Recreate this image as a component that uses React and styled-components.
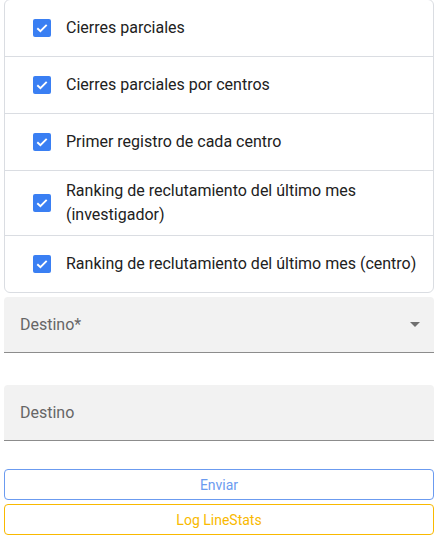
import React from "react";
import styled, { createGlobalStyle } from "styled-components";

const Global = createGlobalStyle`
  html, body { margin: 0; padding: 0; background: #fff; }
  body { font-family: Roboto, "Noto Sans", "Liberation Sans", sans-serif; }
  * { box-sizing: border-box; }
`;

const Page = styled.div`
  display: flex;
  flex-direction: column;
  padding: 0 3px 0 4px;
  width: 437px;
`;

const List = styled.ul`
  list-style: none;
  margin: -1px 0 0 0;
  padding: 0;
  border: 1px solid #dadde2;
  border-radius: 6px;
  overflow: hidden;
`;

const Row = styled.li`
  box-sizing: content-box;
  display: flex;
  align-items: center;
  gap: 15px;
  min-height: 40px;
  padding: 8px 4px 8px 28px;
  border-top: ${(p) => (p.$first ? "none" : "1px solid #dadde2")};
  font-size: 16px;
  line-height: 24px;
  color: #212121;
`;

const Box = styled.span`
  flex: none;
  width: 18px;
  height: 18px;
  border-radius: 2px;
  background: #3a7ff3;
  display: flex;
  align-items: center;
  justify-content: center;
`;

const Field = styled.div`
  display: flex;
  align-items: center;
  justify-content: space-between;
  height: 56px;
  margin-top: ${(p) => p.$mt}px;
  padding: 0 16px;
  background: #f2f2f2;
  border-radius: 4px 4px 0 0;
  border-bottom: 1px solid #8c8c8c;
  color: #666;
  font-size: 16px;
`;

const Arrow = styled.span`
  width: 0;
  height: 0;
  border-left: 5px solid transparent;
  border-right: 5px solid transparent;
  border-top: 5px solid #707070;
  margin-right: -2px;
`;

const Button = styled.button`
  display: block;
  width: 100%;
  height: 31px;
  margin-top: ${(p) => p.$mt}px;
  background: #fff;
  border: 1px solid ${(p) => p.$color};
  border-radius: 4px;
  color: ${(p) => p.$color};
  font-family: Roboto, "Noto Sans", sans-serif;
  font-size: 14px;
  font-weight: 400;
  cursor: pointer;
`;

const Check = () => (
  <Box>
    <svg width="12" height="10" viewBox="0 0 12 10">
      <path d="M1.3 5.2 L4.4 8.2 L10.7 1.8" fill="none" stroke="#fff" strokeWidth="1.9" />
    </svg>
  </Box>
);

const items = [
  "Cierres parciales",
  "Cierres parciales por centros",
  "Primer registro de cada centro",
  "Ranking de reclutamiento del último mes (investigador)",
  "Ranking de reclutamiento del último mes (centro)",
];

export default function App() {
  return (
    <>
      <Global />
      <Page>
        <List>
          {items.map((t, i) => (
            <Row key={t} $first={i === 0}>
              <Check />
              <span>{t}</span>
            </Row>
          ))}
        </List>
        <Field $mt={4}>
          <span>Destino*</span>
          <Arrow />
        </Field>
        <Field $mt={32}>
          <span>Destino</span>
        </Field>
        <Button $mt={28} $color="#6b9bf0">Enviar</Button>
        <Button $mt={4} $color="#f9b900">Log LineStats</Button>
      </Page>
    </>
  );
}
